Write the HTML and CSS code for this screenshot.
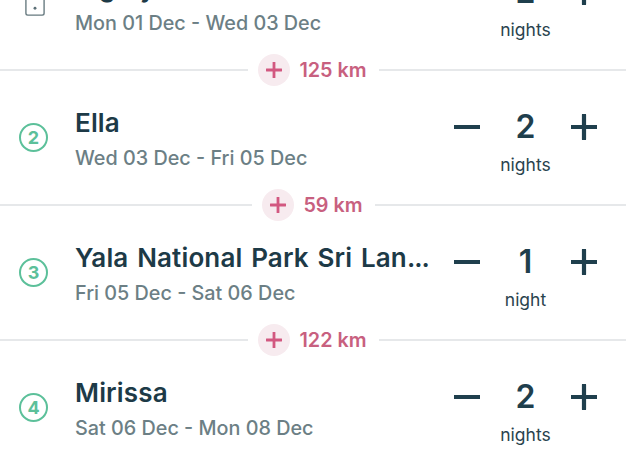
FILE: index.html
```html
<!DOCTYPE html>
<html lang="en">
<head>
<meta charset="utf-8">
<title>Itinerary</title>
<link rel="stylesheet" href="styles.css">
</head>
<body>
<main class="list">
  <section class="stop">
    <span class="marker marker-plain"><svg class="marker-home" viewBox="0 0 22 22" width="20" height="20" aria-hidden="true"><rect x="1" y="1" width="20" height="20" rx="2" fill="none" stroke="#66797f" stroke-width="1.5"/><circle cx="11" cy="13.5" r="1.6" fill="#5c7077"/></svg></span>
    <div class="info"><h2 class="name">Sigiriya</h2><p class="dates">Mon 01 Dec - Wed 03 Dec</p></div>
    <div class="nights">
      <div class="stepper">
        <svg class="step" viewBox="0 0 26 26" aria-hidden="true"><path d="M1 13H25"/></svg>
        <span class="count">2</span>
        <svg class="step" viewBox="0 0 26 26" aria-hidden="true"><path d="M1 13H25M13 1V25"/></svg>
      </div>
      <span class="unit">nights</span>
    </div>
  </section>
  <div class="leg">
    <span class="rule"></span>
    <span class="add"><svg viewBox="0 0 16 16" aria-hidden="true"><path d="M0.5 8H15.5M8 0.5V15.5"/></svg></span>
    <span class="km">125 km</span>
    <span class="rule"></span>
  </div>
  <section class="stop">
    <span class="marker">2</span>
    <div class="info"><h2 class="name">Ella</h2><p class="dates">Wed 03 Dec - Fri 05 Dec</p></div>
    <div class="nights">
      <div class="stepper">
        <svg class="step" viewBox="0 0 26 26" aria-hidden="true"><path d="M1 13H25"/></svg>
        <span class="count">2</span>
        <svg class="step" viewBox="0 0 26 26" aria-hidden="true"><path d="M1 13H25M13 1V25"/></svg>
      </div>
      <span class="unit">nights</span>
    </div>
  </section>
  <div class="leg">
    <span class="rule"></span>
    <span class="add"><svg viewBox="0 0 16 16" aria-hidden="true"><path d="M0.5 8H15.5M8 0.5V15.5"/></svg></span>
    <span class="km">59 km</span>
    <span class="rule"></span>
  </div>
  <section class="stop">
    <span class="marker">3</span>
    <div class="info"><h2 class="name">Yala National Park Sri Lan<span class="more">...</span></h2><p class="dates">Fri 05 Dec - Sat 06 Dec</p></div>
    <div class="nights">
      <div class="stepper">
        <svg class="step" viewBox="0 0 26 26" aria-hidden="true"><path d="M1 13H25"/></svg>
        <span class="count">1</span>
        <svg class="step" viewBox="0 0 26 26" aria-hidden="true"><path d="M1 13H25M13 1V25"/></svg>
      </div>
      <span class="unit">night</span>
    </div>
  </section>
  <div class="leg">
    <span class="rule"></span>
    <span class="add"><svg viewBox="0 0 16 16" aria-hidden="true"><path d="M0.5 8H15.5M8 0.5V15.5"/></svg></span>
    <span class="km">122 km</span>
    <span class="rule"></span>
  </div>
  <section class="stop">
    <span class="marker">4</span>
    <div class="info"><h2 class="name">Mirissa</h2><p class="dates">Sat 06 Dec - Mon 08 Dec</p></div>
    <div class="nights">
      <div class="stepper">
        <svg class="step" viewBox="0 0 26 26" aria-hidden="true"><path d="M1 13H25"/></svg>
        <span class="count">2</span>
        <svg class="step" viewBox="0 0 26 26" aria-hidden="true"><path d="M1 13H25M13 1V25"/></svg>
      </div>
      <span class="unit">nights</span>
    </div>
  </section>
</main>
</body>
</html>
```
FILE: styles.css
```css
* { box-sizing: border-box; }
html, body { margin: 0; height: 100%; overflow: hidden; background: #fff; }
body { font-family: Inter, "Noto Sans", sans-serif; color: #1f3a46; }
.list { margin-top: -65px; display: flex; flex-direction: column; }
.stop { height: 135px; display: flex; align-items: center; padding: 0 29px 0 19px; }
.marker {
  flex: none; width: 29px; height: 29px; margin-right: 27px; border: 2px solid #5cc09a; border-radius: 50%;
  display: flex; align-items: center; justify-content: center;
  font-size: 18px; font-weight: 700; color: #5cc09a;
}
.marker-plain { border: 0; border-radius: 0; }
.marker-home { flex: none; margin: 7px 0 0 2px; }
.info { flex: 1; min-width: 0; padding-top: 3px; }
.name {
  margin: 0; font-size: 26px; line-height: 34px; font-weight: 600; color: #1d3a47;
  letter-spacing: 0.15px; word-spacing: 2px;
  white-space: nowrap;
}
.more { letter-spacing: -1px; }
.dates { margin: 4px 0 0; font-size: 19.8px; line-height: 28px; font-weight: 450; color: #6c7f85; white-space: nowrap; }
.nights { flex: none; width: 143px; margin-left: 25px; padding-top: 11px; display: flex; flex-direction: column; align-items: center; }
.stepper { width: 100%; display: flex; align-items: center; justify-content: space-between; height: 34px; }
.step { width: 26px; height: 26px; fill: none; stroke: #1f3f4d; stroke-width: 4.2; stroke-linecap: round; }
.count { font-size: 32px; font-weight: 600; line-height: 34px; color: #1f3f4d; }
.unit { margin-top: 9px; font-size: 17.5px; line-height: 24px; color: #2a434e; }
.leg { height: 0; display: flex; align-items: center; position: relative; z-index: 1; }
.rule { flex: 1 0 0; height: 2px; background: #e6e8ea; }
.rule:first-child { flex-basis: 1px; }
.add {
  flex: none; width: 32px; height: 32px; margin: 0 9px 0 10px; border-radius: 50%; background: #f7ebef;
  display: flex; align-items: center; justify-content: center;
}
.add svg { width: 16px; height: 16px; fill: none; stroke: #d25880; stroke-width: 2.8; stroke-linecap: round; }
.km { margin-right: 12px; font-size: 19.8px; font-weight: 600; color: #c8607f; white-space: nowrap; }
```
